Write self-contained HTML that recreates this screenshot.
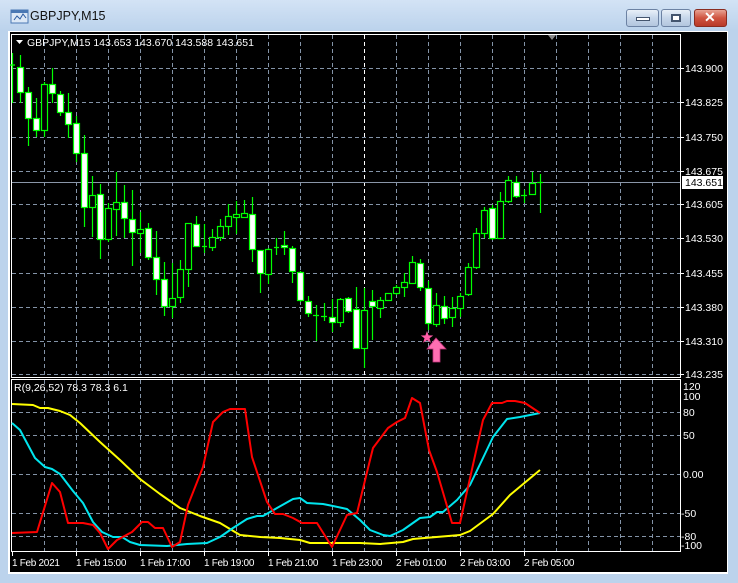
<!DOCTYPE html>
<html><head><meta charset="utf-8"><style>
html,body{margin:0;padding:0;width:738px;height:583px;overflow:hidden;background:#bcd4ee;}
.win{position:absolute;left:0;top:0;width:738px;height:583px;background:linear-gradient(#d3e3f5,#bcd3ec 30px,#bcd3ec);}
.title{position:absolute;left:30px;top:9px;font:12.5px "Liberation Sans",sans-serif;color:#111;}
.btn{position:absolute;top:9px;height:16px;border:1px solid #6c82a3;border-radius:3px;background:linear-gradient(#e9f0f8,#c6d6ea 50%,#b3c6de);}
svg{position:absolute;left:0;top:0;}
text{font-family:"Liberation Sans",sans-serif;}
</style></head><body>
<div class="win">
<svg width="22" height="18" style="left:10px;top:8px" viewBox="0 0 22 18"><rect x="1" y="2" width="17" height="13" fill="#dce8f6" stroke="#4a78b4"/><rect x="1" y="2" width="17" height="3" fill="#4a78b4"/><path d="M4 12l3-4 3 3 3-5 3 4" stroke="#2a5aa0" fill="none"/></svg>
<div class="title">GBPJPY,M15</div>
<div class="btn" style="left:626px;width:31px"><div style="position:absolute;left:9px;top:7px;width:12px;height:2px;background:#fff;border:1px solid #44556e"></div></div>
<div class="btn" style="left:661px;width:28px"><div style="position:absolute;left:9px;top:4px;width:8px;height:6px;border:1px solid #44556e;background:#fff;box-shadow:inset 0 0 0 1px #44556e"></div></div>
<div class="btn" style="left:694px;width:31px;border-color:#8a2c20;background:linear-gradient(#e8a393,#cf5440 50%,#b83a28);"><div style="position:absolute;left:9px;top:-1px;color:#fff;font:bold 14px 'Liberation Sans',sans-serif;">✕</div></div>
</div>
<svg width="738" height="583">
<rect x="8" y="31" width="720" height="543" fill="#fff"/>
<rect x="10" y="32" width="717" height="540" fill="#000"/>
<g stroke="#8393a7" stroke-width="1" stroke-dasharray="4,3">
<path d="M12 68.5H680M12 102.5H680M12 137.5H680M12 171.5H680M12 204.5H680M12 238.5H680M12 273.5H680M12 307.5H680M12 341.5H680M12 374.5H680"/>
<path d="M44.5 35V377M76.5 35V377M108.5 35V377M140.5 35V377M172.5 35V377M204.5 35V377M236.5 35V377M268.5 35V377M300.5 35V377M332.5 35V377M396.5 35V377M428.5 35V377M460.5 35V377M492.5 35V377M524.5 35V377M556.5 35V377M588.5 35V377M620.5 35V377M652.5 35V377"/>
<path d="M12 412.5H680M12 435.5H680M12 474.5H680M12 513.5H680M12 536.5H680"/>
<path d="M44.5 380V551M76.5 380V551M108.5 380V551M140.5 380V551M172.5 380V551M204.5 380V551M236.5 380V551M268.5 380V551M300.5 380V551M332.5 380V551M364.5 380V551M396.5 380V551M428.5 380V551M460.5 380V551M492.5 380V551M524.5 380V551M556.5 380V551M588.5 380V551M620.5 380V551M652.5 380V551"/>
</g>
<path d="M364.5 35V377" stroke="#fff" stroke-dasharray="4,3"/>
<path d="M12 182.5H680" stroke="#8a96a8"/>
<rect x="11.5" y="34.5" width="669" height="343" fill="none" stroke="#fff"/>
<rect x="11.5" y="379.5" width="669" height="172" fill="none" stroke="#fff"/>
<path d="M548 35l4 5 4-5z" fill="#888"/>
<path d="M16 40h7l-3.5 4z" fill="#fff"/>
<text x="27" y="46" font-size="10.5" fill="#fff">GBPJPY,M15  143.653 143.670 143.588 143.651</text>
<g stroke="#00ff00" stroke-width="1.2" fill="#fff">
<path d="M12.5 53V103M20.5 55V103M28.5 87V146M36.5 98V137M44.5 82V137M52.5 68V103M60.5 91V116M68.5 93V138M76.5 116V162M84.5 135V227M92.5 176V237M100.5 184V259M108.5 203V242M116.5 172V236M124.5 185V238M132.5 190V266M140.5 212V253M148.5 223V260M156.5 231V295M164.5 262V316M172.5 263V318M180.5 260V303M188.5 223V287M196.5 216V247M204.5 224V253M212.5 229V251M220.5 219V241M228.5 204V235M236.5 201V234M244.5 200V218M252.5 197V262M260.5 250V293M268.5 248V284M276.5 238V255M284.5 231V255M292.5 246V283M300.5 271V302M308.5 296V317M316.5 305V341M324.5 303V321M332.5 299V332M340.5 298V327M348.5 297V313M356.5 287V348M364.5 288V368M372.5 290V340M380.5 297V318M388.5 293V301M396.5 285V295M404.5 273V297M412.5 256V284M420.5 259V291M428.5 281V330M436.5 293V327M444.5 296V324M452.5 297V327M460.5 293V317M468.5 263V296M476.5 228V269M484.5 207V238M492.5 205V240M500.5 192V238M508.5 176V203M516.5 176V198M524.5 190V203M532.5 172V195M540.5 174V213"/>
<path d="M10 65H15M202 246.5H207M274 247.5H279M313 315.5H319M321 316.5H327M521 195.5H527M537 182.5H543" />
<rect x="17.5" y="67.5" width="6" height="25"/>
<rect x="25.5" y="92.5" width="6" height="26"/>
<rect x="33.5" y="118.5" width="6" height="12"/>
<rect x="41.5" y="84.5" width="6" height="46" fill="#000"/>
<rect x="49.5" y="84.5" width="6" height="9"/>
<rect x="57.5" y="94.5" width="6" height="18"/>
<rect x="65.5" y="112.5" width="6" height="12"/>
<rect x="73.5" y="123.5" width="6" height="30"/>
<rect x="81.5" y="153.5" width="6" height="54"/>
<rect x="89.5" y="195.5" width="6" height="12" fill="#000"/>
<rect x="97.5" y="194.5" width="6" height="45"/>
<rect x="105.5" y="208.5" width="6" height="31" fill="#000"/>
<rect x="113.5" y="202.5" width="6" height="7" fill="#000"/>
<rect x="121.5" y="202.5" width="6" height="16"/>
<rect x="129.5" y="219.5" width="6" height="13"/>
<rect x="137.5" y="229.5" width="6" height="4" fill="#000"/>
<rect x="145.5" y="228.5" width="6" height="29"/>
<rect x="153.5" y="257.5" width="6" height="22"/>
<rect x="161.5" y="279.5" width="6" height="27"/>
<rect x="169.5" y="298.5" width="6" height="8" fill="#000"/>
<rect x="177.5" y="269.5" width="6" height="28" fill="#000"/>
<rect x="185.5" y="223.5" width="6" height="46" fill="#000"/>
<rect x="193.5" y="224.5" width="6" height="22"/>
<rect x="209.5" y="237.5" width="6" height="10" fill="#000"/>
<rect x="217.5" y="226.5" width="6" height="11" fill="#000"/>
<rect x="225.5" y="216.5" width="6" height="10" fill="#000"/>
<rect x="233.5" y="214.5" width="6" height="3" fill="#000"/>
<rect x="241.5" y="213.5" width="6" height="4" fill="#000"/>
<rect x="249.5" y="214.5" width="6" height="35"/>
<rect x="257.5" y="250.5" width="6" height="23"/>
<rect x="265.5" y="249.5" width="6" height="25" fill="#000"/>
<rect x="281.5" y="245.5" width="6" height="2"/>
<rect x="289.5" y="248.5" width="6" height="23"/>
<rect x="297.5" y="272.5" width="6" height="28"/>
<rect x="305.5" y="301.5" width="6" height="12"/>
<rect x="329.5" y="317.5" width="6" height="5"/>
<rect x="337.5" y="299.5" width="6" height="23" fill="#000"/>
<rect x="345.5" y="298.5" width="6" height="13"/>
<rect x="353.5" y="309.5" width="6" height="39"/>
<rect x="361.5" y="310.5" width="6" height="38" fill="#000"/>
<rect x="369.5" y="301.5" width="6" height="5"/>
<rect x="377.5" y="300.5" width="6" height="8" fill="#000"/>
<rect x="385.5" y="293.5" width="6" height="7" fill="#000"/>
<rect x="393.5" y="287.5" width="6" height="6" fill="#000"/>
<rect x="401.5" y="282.5" width="6" height="5" fill="#000"/>
<rect x="409.5" y="262.5" width="6" height="21" fill="#000"/>
<rect x="417.5" y="263.5" width="6" height="24"/>
<rect x="425.5" y="288.5" width="6" height="35"/>
<rect x="433.5" y="305.5" width="6" height="19" fill="#000"/>
<rect x="441.5" y="306.5" width="6" height="12"/>
<rect x="449.5" y="308.5" width="6" height="9" fill="#000"/>
<rect x="457.5" y="296.5" width="6" height="12" fill="#000"/>
<rect x="465.5" y="267.5" width="6" height="27" fill="#000"/>
<rect x="473.5" y="233.5" width="6" height="34" fill="#000"/>
<rect x="481.5" y="210.5" width="6" height="23" fill="#000"/>
<rect x="489.5" y="208.5" width="6" height="30"/>
<rect x="497.5" y="201.5" width="6" height="37" fill="#000"/>
<rect x="505.5" y="180.5" width="6" height="21" fill="#000"/>
<rect x="513.5" y="182.5" width="6" height="14"/>
<rect x="529.5" y="183.5" width="6" height="11" fill="#000"/>
</g>
<path d="M427 331l1.6 4.4 4.6.1-3.7 2.8 1.4 4.5-3.9-2.7-3.9 2.7 1.4-4.5-3.7-2.8 4.6-.1z" fill="#ff5ca8"/>
<path d="M436 338l10 11h-6v13h-7v-13h-6z" fill="#ff6fb2" stroke="#c0327a" stroke-width="0.8"/>
<g fill="#fff" font-size="10.5">
<text x="685" y="72">143.900</text><text x="685" y="106">143.825</text><text x="685" y="141">143.750</text><text x="685" y="175">143.675</text><text x="685" y="208">143.605</text><text x="685" y="242">143.530</text><text x="685" y="277">143.455</text><text x="685" y="311">143.380</text><text x="685" y="345">143.310</text><text x="685" y="378">143.235</text>
<text x="683" y="390">120</text><text x="683" y="400">100</text><text x="683" y="416">80</text><text x="683" y="439">50</text><text x="683" y="478">0.00</text><text x="681" y="517">-50</text><text x="681" y="540">-80</text><text x="681" y="549">-100</text>
</g>
<path d="M680 68.5h4M680 102.5h4M680 137.5h4M680 171.5h4M680 204.5h4M680 238.5h4M680 273.5h4M680 307.5h4M680 341.5h4M680 374.5h4" stroke="#fff"/>
<rect x="682" y="176" width="41" height="13" fill="#fff"/>
<text x="685" y="186" font-size="10.5" fill="#000">143.651</text>
<text x="14" y="391" font-size="10.5" fill="#fff">R(9,26,52) 78.3 78.3 6.1</text>
<g fill="none" stroke-width="2" stroke-linejoin="round">
<polyline stroke="#ffff00" points="12,404 33,405 40,408 48,408 60,411 70,415 80,423 100,442 120,460 140,479 160,494 180,508 200,516 220,523 240,535 260,537 280,538 300,540 310,543 330,543 360,543 380,544 403,542 413,539 460,535 470,531 493,514 510,495 540,470"/>
<polyline stroke="#00e5ee" points="12,423 20,430 35,458 45,467 52,469 60,474 73,491 83,503 93,522 102,532 113,537 122,537 130,542 140,545 167,546 187,544 207,543 220,537 233,528 247,519 257,516 263,516 277,508 293,499 300,498 307,503 323,504 333,506 347,509 360,520 370,530 383,535 390,536 403,530 420,518 430,517 437,512 443,512 457,500 470,485 483,458 493,437 507,419 520,417 540,413"/>
<polyline stroke="#ff0000" points="12,533 37,532 52,483 60,492 68,523 83,523 93,525 100,533 108,549 117,540 132,532 142,522 148,522 155,528 163,528 172,547 180,542 188,505 203,467 213,422 223,412 230,409 245,409 252,457 267,502 275,514 283,514 293,518 302,523 317,523 332,547 347,515 357,513 370,460 373,448 388,428 397,422 405,418 412,398 420,403 429,450 437,472 452,523 460,523 483,420 492,403 502,403 507,401 515,401 525,403 540,413"/>
</g>
<path d="M12.5 552v4M76.5 552v4M140.5 552v4M204.5 552v4M268.5 552v4M332.5 552v4M396.5 552v4M460.5 552v4M524.5 552v4" stroke="#fff"/>
<g fill="#fff" font-size="10" letter-spacing="-0.3">
<text x="12" y="566">1 Feb 2021</text><text x="76" y="566">1 Feb 15:00</text><text x="140" y="566">1 Feb 17:00</text><text x="204" y="566">1 Feb 19:00</text><text x="268" y="566">1 Feb 21:00</text><text x="332" y="566">1 Feb 23:00</text><text x="396" y="566">2 Feb 01:00</text><text x="460" y="566">2 Feb 03:00</text><text x="524" y="566">2 Feb 05:00</text>
</g>
</svg>
</body></html>
